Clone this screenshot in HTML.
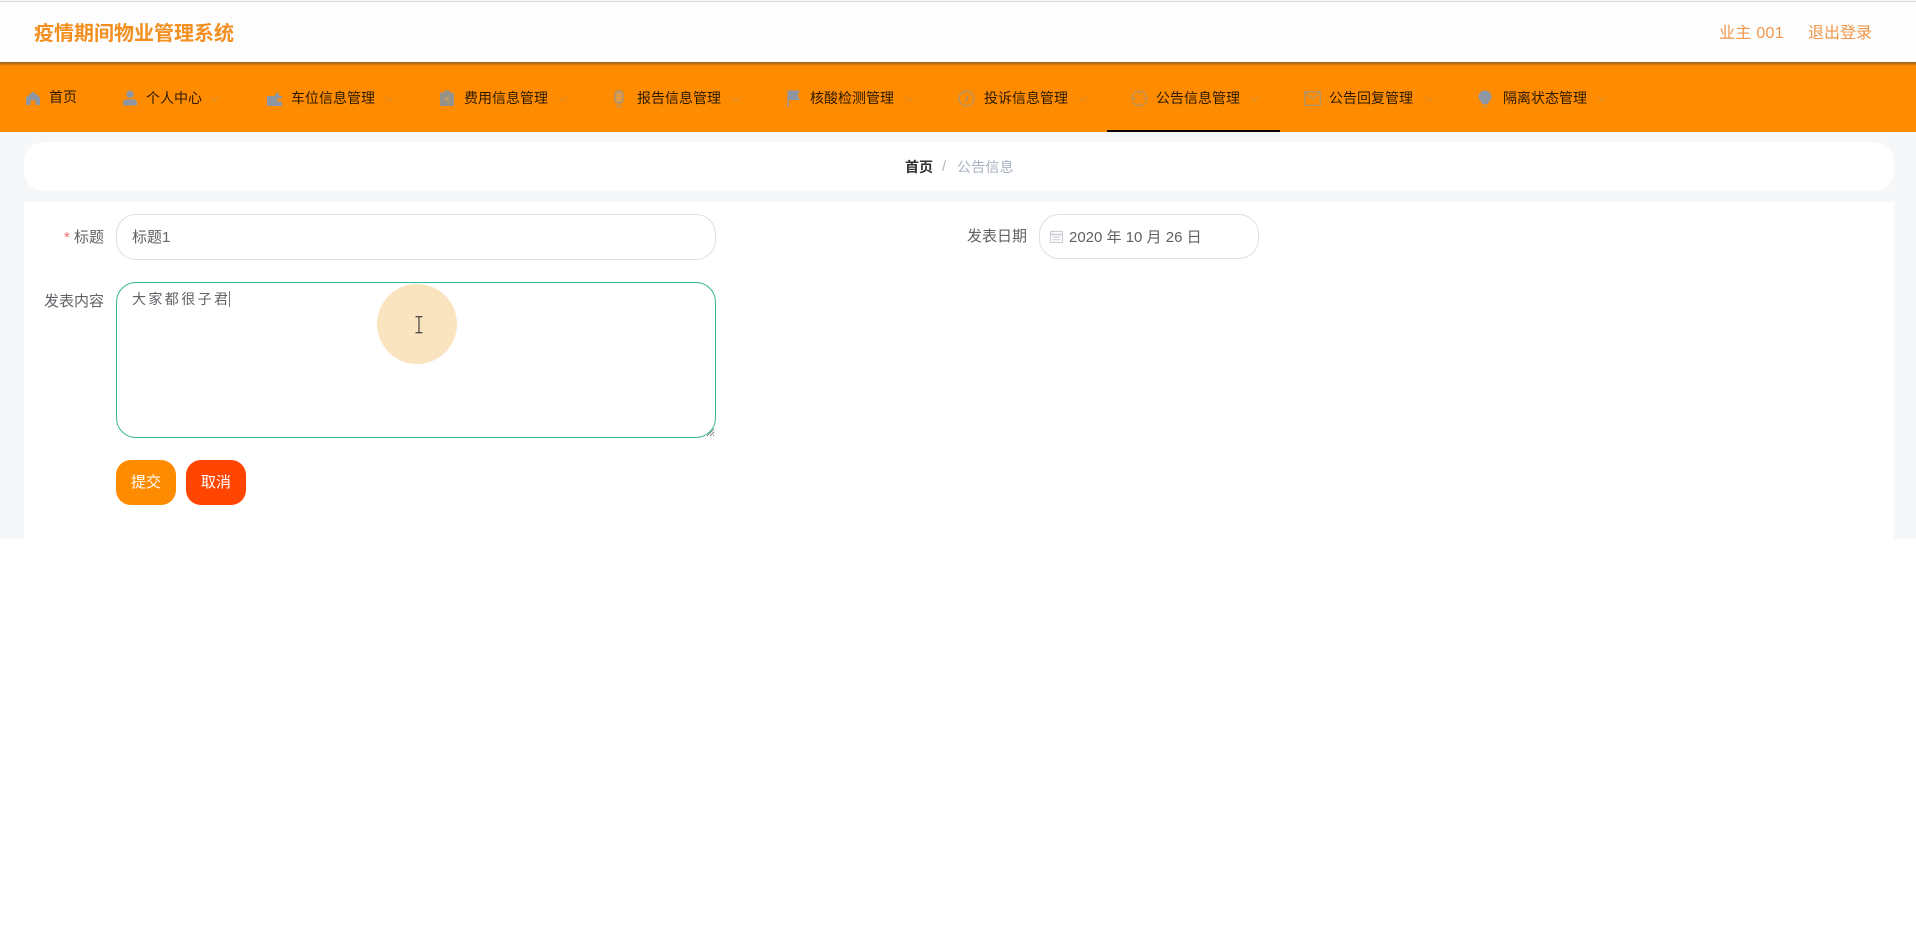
<!DOCTYPE html>
<html lang="zh"><head><meta charset="utf-8"><title>疫情期间物业管理系统</title>
<style>
html,body{margin:0;padding:0;background:#fff;}
body{width:1916px;height:934px;position:relative;overflow:hidden;font-family:"Liberation Sans","Noto Sans CJK SC",sans-serif;}
.a{position:absolute;white-space:nowrap;}
.t{position:absolute;white-space:nowrap;font-size:14px;line-height:20px;height:20px;top:88px;color:#2b1a00;}
svg{position:absolute;display:block;}
.lab{position:absolute;white-space:nowrap;font-size:15px;line-height:20px;color:#606266;}
</style></head><body>
<div class="a" style="left:0;top:0;width:1916px;height:539px;background:#f6f7f9"></div>
<div class="a" style="left:0;top:1px;width:1916px;height:61px;background:#fdfdfd;border-top:1px solid #dcdcdc;box-sizing:border-box"></div>
<div class="a" style="left:34px;top:20px;font-size:20px;line-height:28px;font-weight:700;color:#f28f1f">疫情期间物业管理系统</div>
<div class="a" style="left:1719px;top:23px;font-size:16px;line-height:22px;letter-spacing:.3px;color:#f0964a">业主 001</div>
<div class="a" style="left:1808px;top:23px;font-size:16px;line-height:22px;color:#f0964a">退出登录</div>

<div class="a" style="left:0;top:62px;width:1916px;height:70px;background:#ff8c00"></div>
<div class="a" style="left:0;top:62px;width:1916px;height:4px;background:linear-gradient(#96601f,#ff8c00)"></div>
<div class="a" style="left:1107px;top:130px;width:173px;height:2px;background:#0a0000"></div>

<!-- home -->
<svg style="left:26px;top:91px" width="14" height="14" viewBox="0 0 15 15"><path d="M7.500 0.500L15 7V15H10V10H5V15H0V7Z" fill="#8f96a3"/></svg>
<div class="t" style="left:49px;top:87px">首页</div>
<!-- user -->
<svg style="left:123px;top:90px" width="14" height="16" viewBox="0 0 15 16"><circle cx="7.500" cy="4" r="4" fill="#8f96a3"/><path d="M0 16V12.500C0 10.500 2 9.500 4 9.500H11C13 9.500 15 10.500 15 12.500V16Z" fill="#8f96a3"/></svg>
<div class="t" style="left:146px">个人中心</div>
<svg style="left:210px;top:96px" width="10" height="6" viewBox="0 0 11 6"><path d="M1 1L5.500 5L10 1" fill="none" stroke="#cf8c34" stroke-width="1"/></svg>
<!-- wallet/car -->
<svg style="left:267px;top:91px" width="15" height="15" viewBox="0 0 15 15"><path d="M0 5H7L11 0.500L12.500 5H15V7.500H10.500V10.500H15V15H0Z" fill="#8f96a3"/></svg>
<div class="t" style="left:291px">车位信息管理</div>
<svg style="left:384px;top:96px" width="10" height="6" viewBox="0 0 11 6"><path d="M1 1L5.500 5L10 1" fill="none" stroke="#cf8c34" stroke-width="1"/></svg>
<!-- clipboard -->
<svg style="left:440px;top:90px" width="14" height="16" viewBox="0 0 14 16"><path d="M0 2.500H4V0.500H10V2.500H14V16H0Z" fill="#96928a"/><path d="M5 7L9 11M9 7L5 11" stroke="#d49a50" stroke-width="1"/></svg>
<div class="t" style="left:464px">费用信息管理</div>
<svg style="left:558px;top:96px" width="10" height="6" viewBox="0 0 11 6"><path d="M1 1L5.500 5L10 1" fill="none" stroke="#cf8c34" stroke-width="1"/></svg>
<!-- mic -->
<svg style="left:613px;top:90px" width="12" height="18" viewBox="0 0 12 18"><rect x="2" y="1" width="8" height="12" rx="3" fill="#d09a58" stroke="#a0917c" stroke-width="1.200"/><path d="M3 5H9M3 7.500H9M3 10H9" stroke="#ff9a20" stroke-width=".8"/><path d="M6 13.500V16M3 16.500H9" stroke="#b09468" stroke-width="1.200"/></svg>
<div class="t" style="left:637px">报告信息管理</div>
<svg style="left:731px;top:96px" width="10" height="6" viewBox="0 0 11 6"><path d="M1 1L5.500 5L10 1" fill="none" stroke="#cf8c34" stroke-width="1"/></svg>
<!-- flag -->
<svg style="left:787px;top:90px" width="14" height="17" viewBox="0 0 14 17"><path d="M0.500 0.500H13L10.500 5L13 10H2V17H0.500Z" fill="#8f96a3"/></svg>
<div class="t" style="left:810px">核酸检测管理</div>
<svg style="left:904px;top:96px" width="10" height="6" viewBox="0 0 11 6"><path d="M1 1L5.500 5L10 1" fill="none" stroke="#cf8c34" stroke-width="1"/></svg>
<!-- compass -->
<svg style="left:958px;top:90px" width="17" height="17" viewBox="0 0 17 17"><circle cx="8.500" cy="8.500" r="7.300" fill="none" stroke="#b09468" stroke-width="1.300"/><path d="M11 4.500L9.500 9.500L6.500 12.500L7.800 8Z" fill="#a08c6c"/></svg>
<div class="t" style="left:984px">投诉信息管理</div>
<svg style="left:1078px;top:96px" width="10" height="6" viewBox="0 0 11 6"><path d="M1 1L5.500 5L10 1" fill="none" stroke="#cf8c34" stroke-width="1"/></svg>
<!-- target -->
<svg style="left:1131px;top:90px" width="17" height="17" viewBox="0 0 18 18"><circle cx="9" cy="9" r="7.800" fill="none" stroke="#b09468" stroke-width="1.200"/><path d="M9 1V6M9 12V17M1 9H6M12 9H17" fill="none" stroke="#b09468" stroke-width="1"/></svg>
<div class="t" style="left:1156px">公告信息管理</div>
<svg style="left:1250px;top:96px" width="10" height="6" viewBox="0 0 11 6"><path d="M1 1L5.500 5L10 1" fill="none" stroke="#cf8c34" stroke-width="1"/></svg>
<!-- message -->
<svg style="left:1304px;top:91px" width="17" height="15" viewBox="0 0 17 15"><rect x=".7" y=".7" width="15.600" height="13.600" fill="none" stroke="#b09468" stroke-width="1.300"/><path d="M1 1.500L8.500 8L16 1.500" fill="none" stroke="#b09468" stroke-width="1.200"/></svg>
<div class="t" style="left:1329px">公告回复管理</div>
<svg style="left:1424px;top:96px" width="10" height="6" viewBox="0 0 11 6"><path d="M1 1L5.500 5L10 1" fill="none" stroke="#cf8c34" stroke-width="1"/></svg>
<!-- bulb -->
<svg style="left:1478px;top:90px" width="14" height="18" viewBox="0 0 14 18"><path d="M7 0.500C10.800 0.500 13.500 3.300 13.500 6.800C13.500 10 10.500 11.500 10 14H4C3.500 11.500 0.500 10 0.500 6.800C0.500 3.300 3.200 0.500 7 0.500Z" fill="#8f96a3"/><path d="M4.500 15H9.500L8.500 17.500H5.500Z" fill="#c99a55"/></svg>
<div class="t" style="left:1503px">隔离状态管理</div>
<svg style="left:1597px;top:96px" width="10" height="6" viewBox="0 0 11 6"><path d="M1 1L5.500 5L10 1" fill="none" stroke="#cf8c34" stroke-width="1"/></svg>

<!-- breadcrumb -->
<div class="a" style="left:24px;top:142px;width:1870px;height:49px;background:#fff;border-radius:20px"></div>
<div class="a" style="left:905px;top:157px;font-size:14px;line-height:20px;font-weight:700;color:#303133">首页</div>
<div class="a" style="left:942px;top:157px;font-size:15px;line-height:20px;color:#b4b8c0">/</div>
<div class="a" style="left:957px;top:157px;font-size:14px;line-height:20px;letter-spacing:.2px;color:#a8b0bf">公告信息</div>

<!-- form card -->
<div class="a" style="left:24px;top:202px;width:1870px;height:337px;background:#fff"></div>
<div class="lab" style="left:64px;top:228px"><span style="color:#f56c6c">*</span> 标题</div>
<div class="a" style="left:116px;top:214px;width:600px;height:46px;box-sizing:border-box;border:1px solid #dcdfe6;border-radius:20px;background:#fff"></div>
<div class="lab" style="left:132px;top:228px">标题1</div>

<div class="lab" style="left:967px;top:227px">发表日期</div>
<div class="a" style="left:1039px;top:214px;width:220px;height:45px;box-sizing:border-box;border:1px solid #dcdfe6;border-radius:20px;background:#fff"></div>
<svg style="left:1050px;top:230px" width="13" height="13" viewBox="0 0 13 13"><rect x=".5" y="1.500" width="12" height="11" fill="none" stroke="#c8ccd3"/><path d="M.5 4.500H12.500" stroke="#c8ccd3" stroke-width="1.500"/><path d="M3 .5V2.500M10 .5V2.500M2.500 7H10.500M2.500 9.800H10.500" stroke="#c8ccd3"/></svg>
<div class="lab" style="left:1069px;top:228px">2020 年 10 月 26 日</div>

<div class="lab" style="left:44px;top:292px">发表内容</div>
<div class="a" style="left:116px;top:282px;width:600px;height:156px;box-sizing:border-box;border:1px solid #36b596;border-radius:20px;background:#fff"></div>
<svg style="left:706px;top:428px" width="9" height="9" viewBox="0 0 9 9"><path d="M8 1L1 8M8 4L4 8M8 7L7 8" stroke="#666" stroke-width=".8"/></svg>
<div class="a" style="left:132px;top:289px;font-size:14px;line-height:20px;letter-spacing:2.400px;color:#606266">大家都很子君</div>
<div class="a" style="left:229px;top:291px;width:1px;height:16px;background:#777"></div>

<div class="a" style="left:377px;top:284px;width:80px;height:80px;border-radius:50%;background:#fae3bf"></div>
<svg style="left:415px;top:316px" width="8" height="18" viewBox="0 0 8 18"><path d="M.5 .8H7.500M.5 16.800H7.500M4 .8V16.800" stroke="#222" stroke-width="1" fill="none"/></svg>

<div class="a" style="left:116px;top:460px;width:60px;height:45px;border-radius:15px;background:#ff8c00;color:#fff;font-size:15px;line-height:45px;text-align:center">提交</div>
<div class="a" style="left:186px;top:460px;width:60px;height:45px;border-radius:15px;background:#ff4500;color:#fff;font-size:15px;line-height:45px;text-align:center">取消</div>
</body></html>
